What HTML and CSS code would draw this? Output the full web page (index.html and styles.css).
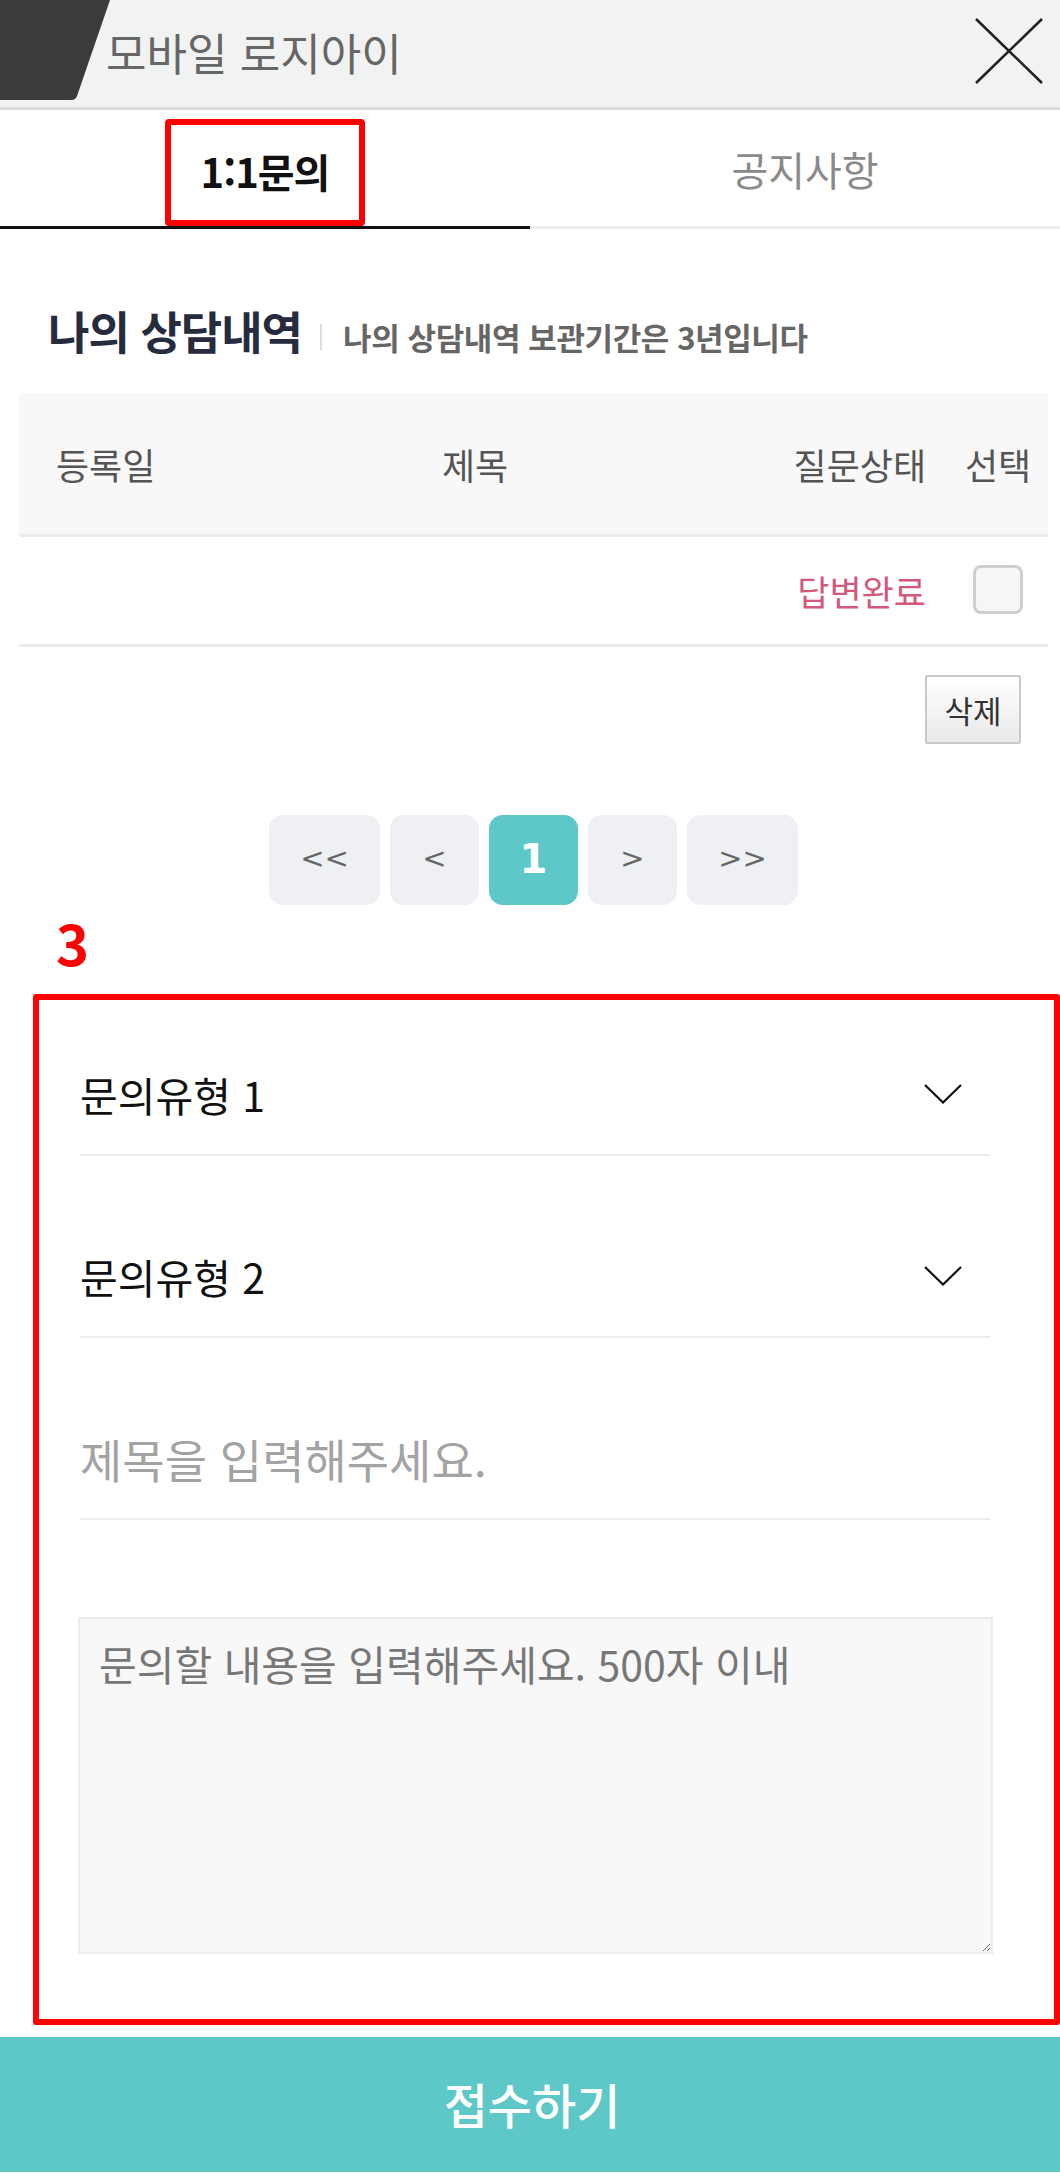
FILE: index.html
```html
<!DOCTYPE html>
<html lang="ko">
<head>
<meta charset="utf-8">
<title>모바일 로지아이</title>
<link rel="stylesheet" href="styles.css">
</head>
<body>
<header class="topbar">
  <svg class="topbar-deco" width="110" height="100" viewBox="0 0 110 100"><path d="M0 0 H110 L77 96 Q75.5 100 71 100 H0 Z" fill="#3b3b3b"/></svg>
  <h1 class="topbar-title">모바일 로지아이</h1>
  <svg class="topbar-close" width="68" height="66" viewBox="0 0 68 66"><path d="M1 1 L67 65 M67 1 L1 65" stroke="#222" stroke-width="2.6" fill="none"/></svg>
</header>

<nav class="tabs">
  <div class="tab tab-active"><span class="tab-mark">1:1문의</span></div>
  <div class="tab tab-idle">공지사항</div>
</nav>

<section class="history">
  <div class="history-head">
    <h2 class="history-title">나의 상담내역</h2>
    <span class="history-sep"></span>
    <span class="history-sub">나의 상담내역 보관기간은 3년입니다</span>
  </div>

  <div class="table">
    <div class="trow thead">
      <div class="c1">등록일</div>
      <div class="c2">제목</div>
      <div class="c3">질문상태</div>
      <div class="c4">선택</div>
    </div>
    <div class="trow tbody">
      <div class="c1"></div>
      <div class="c2"></div>
      <div class="c3 status">답변완료</div>
      <div class="c4"><span class="check"></span></div>
    </div>
  </div>

  <div class="delete-row"><button class="delete-btn">삭제</button></div>

  <div class="pager">
    <span class="pg pg-wide">&lt;&lt;</span>
    <span class="pg">&lt;</span>
    <span class="pg pg-on">1</span>
    <span class="pg">&gt;</span>
    <span class="pg pg-wide">&gt;&gt;</span>
  </div>
</section>

<div class="step-no">3</div>

<form class="ask">
  <div class="field field-first">
    <span>문의유형 1</span>
    <svg class="chev" width="38" height="20" viewBox="0 0 38 20"><path d="M1 1 L19 18.5 L37 1" stroke="#111" stroke-width="2.2" fill="none"/></svg>
  </div>
  <div class="field">
    <span>문의유형 2</span>
    <svg class="chev" width="38" height="20" viewBox="0 0 38 20"><path d="M1 1 L19 18.5 L37 1" stroke="#111" stroke-width="2.2" fill="none"/></svg>
  </div>
  <input class="field field-input" type="text" placeholder="제목을 입력해주세요.">
  <textarea class="content" placeholder="문의할 내용을 입력해주세요. 500자 이내"></textarea>
</form>

<button class="submit">접수하기</button>
</body>
</html>
```

FILE: styles.css
```css
* { box-sizing: border-box; }
html, body { margin: 0; padding: 0; }
body {
  width: 1060px;
  background: #fff;
  font-family: "Noto Sans CJK KR", "Noto Sans", sans-serif;
  color: #111;
}

/* top bar */
.topbar {
  display: flex;
  height: 110px;
  background: #f1f2f2;
  border-bottom: 3px solid #dcdcdc;
}
.topbar-deco { display: block; flex: none; }
.topbar-title {
  margin: 0 0 0 -4px;
  align-self: center;
  font-size: 44px;
  font-weight: 400;
  line-height: 1;
  color: #666;
  padding-bottom: 4px;
}
.topbar-close {
  display: block;
  margin: 18px 17px 0 auto;
  flex: none;
}

/* tabs */
.tabs { display: flex; }
.tab {
  flex: 0 0 50%;
  height: 119px;
  display: flex;
  justify-content: center;
}
.tab-active { border-bottom: 3px solid #111; }
.tab-idle {
  border-bottom: 3px solid #eee;
  align-items: center;
  font-size: 40px;
  color: #8a8a8a;
  padding-left: 20px;
  padding-top: 2px;
}
.tab-mark {
  display: block;
  margin-top: 9px;
  height: 107px;
  padding: 0 30px;
  border: 6px solid #ff0000;
  border-radius: 4px;
  font-size: 40px;
  font-weight: 700;
  line-height: 93px;
  color: #111;
  letter-spacing: -1px;
}

/* history */
.history { padding: 0 12px 0 19px; }
.history-head {
  display: flex;
  align-items: baseline;
  margin-top: 79px;
  padding-left: 29px;
}
.history-title {
  margin: 0;
  font-size: 45px;
  font-weight: 700;
  line-height: 45px;
  color: #262b3d;
  letter-spacing: -1px;
}
.history-sep {
  display: inline-block;
  width: 2px;
  height: 26px;
  background: #ddd;
  margin: 0 21px 0 18px;
}
.history-sub {
  font-size: 31px;
  font-weight: 700;
  color: #666;
  letter-spacing: -0.4px;
}

.table { margin-top: 34px; }
.trow {
  display: grid;
  grid-template-columns: 231px 450px 248px 100px;
  align-items: center;
  font-size: 36px;
}
.thead {
  height: 144px;
  background: #f8f8f8;
  border-bottom: 3px solid #ececec;
  color: #555;
}
.tbody {
  height: 110px;
  border-bottom: 3px solid #ececec;
}
.c1 { padding-left: 37px; }
.c2 { text-align: center; }
.c3 { text-align: right; padding-right: 22px; }
.c4 { text-align: center; display: flex; justify-content: center; }
.status { color: #d4587c; font-size: 35px; }
.check {
  display: block;
  width: 50px;
  height: 49px;
  border: 3px solid #cfcfcf;
  border-radius: 8px;
  background: #f6f6f6;
  margin-top: -3px;
}

.delete-row {
  display: flex;
  justify-content: flex-end;
  margin-top: 28px;
  padding-right: 27px;
}
.delete-btn {
  width: 96px;
  height: 69px;
  padding: 0;
  border: 2px solid #c9c9c9;
  border-radius: 2px;
  background: linear-gradient(#ffffff, #e9e9e9);
  font-family: "Noto Sans CJK KR", sans-serif;
  font-size: 31px;
  color: #333;
  line-height: 1;
}

.pager {
  display: flex;
  justify-content: center;
  gap: 10px;
  margin-top: 71px;
}
.pg {
  width: 89px;
  height: 90px;
  border-radius: 14px;
  background: #eef0f3;
  display: flex;
  align-items: center;
  justify-content: center;
  font-family: "DejaVu Sans", sans-serif;
  font-size: 29px;
  color: #666;
  padding-bottom: 4px;
}
.pg-wide { width: 111px; }
.pg-on {
  background: #5ec8c8;
  color: #fff;
  font-weight: 700;
  font-size: 40px;
  padding-bottom: 2px;
}

.step-no {
  margin: 9px 0 0 56px;
  font-size: 56px;
  font-weight: 700;
  line-height: 56px;
  color: #ff0000;
}

/* form */
.ask {
  margin: 24px 0 0 33px;
  border: 6px solid #ff0000;
  border-radius: 3px;
  padding: 34px 64px 65px 41px;
}
.field {
  display: flex;
  align-items: center;
  justify-content: space-between;
  width: 100%;
  height: 122px;
  margin-top: 60px;
  border: 0;
  border-bottom: 2px solid #ececec;
  font-size: 41px;
  color: #111;
}
.field-first { margin-top: 0; }
.field .chev { margin-right: 28px; }
.field-input {
  display: block;
  padding: 0;
  font-family: "Noto Sans CJK KR", sans-serif;
  font-size: 46px;
  outline: none;
  background: transparent;
}
.field-input::placeholder { color: #a3a3a3; }
.content {
  display: block;
  width: calc(100% + 5px);
  height: 337px;
  margin: 97px 0 0 -2px;
  padding: 16px 19px;
  border: 2px solid #ececec;
  background: #f8f8f8;
  font-family: "Noto Sans CJK KR", sans-serif;
  font-size: 41px;
  line-height: 1.4;
  outline: none;
}
.content::placeholder { color: #777; }

.submit {
  display: block;
  width: 100%;
  height: 135px;
  margin-top: 12px;
  border: 0;
  background: #5ec8c8;
  color: #fff;
  font-family: "Noto Sans CJK KR", sans-serif;
  font-size: 48px;
  font-weight: 500;
  padding: 0 0 4px 4px;
}
```
